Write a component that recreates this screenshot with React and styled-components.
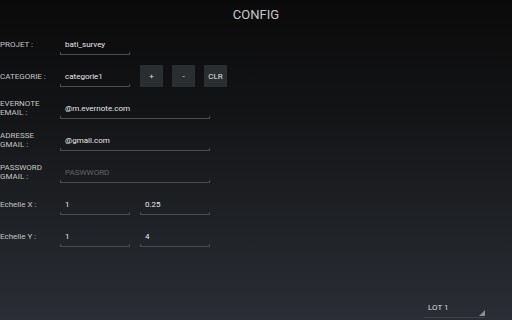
import React from "react";
import styled, { createGlobalStyle } from "styled-components";

const GlobalStyle = createGlobalStyle`
  html, body {
    margin: 0;
    padding: 0;
  }
  body {
    font-family: Roboto, "Liberation Sans", sans-serif;
  }
`;

const Screen = styled.div`
  width: 512px;
  height: 320px;
  display: flex;
  flex-direction: column;
  background: linear-gradient(180deg, #0a0a0a 0%, #131416 35%, #1f2226 70%, #2a2d35 100%);
  overflow: hidden;
`;

const Title = styled.h1`
  margin: 0;
  height: 28px;
  display: flex;
  align-items: center;
  justify-content: center;
  font-size: 13px;
  font-weight: 400;
  color: #c8c8c8;
`;

const Form = styled.div`
  display: flex;
  flex-direction: column;
`;

const Row = styled.div`
  height: 32px;
  display: flex;
  align-items: center;
`;

const Label = styled.div`
  width: 60px;
  font-size: 8px;
  line-height: 9px;
  color: #c4c4c4;
  white-space: pre-line;
`;

const Fields = styled.div`
  display: flex;
  align-items: center;
  gap: ${(p) => p.$gap || 10}px;
`;

const Field = styled.div`
  width: ${(p) => (p.$wide ? 150 : 70)}px;
  height: 22px;
  box-sizing: border-box;
  padding-left: 5px;
  display: flex;
  align-items: center;
  font-size: 8px;
  color: ${(p) => (p.$placeholder ? "#626466" : "#e8e8e8")};
  background-image: linear-gradient(#4a4c50, #4a4c50),
    linear-gradient(#4a4c50, #4a4c50), linear-gradient(#4a4c50, #4a4c50);
  background-repeat: no-repeat;
  background-size: 100% 1px, 1px 3px, 1px 3px;
  background-position: left bottom, left bottom, right bottom;
`;

const Button = styled.div`
  width: 23px;
  height: 22px;
  margin-left: ${(p) => p.$first ? 10 : 9}px;
  display: flex;
  align-items: center;
  justify-content: center;
  background: #2b2e31;
  color: #e0e0e0;
  font-size: 8px;
`;

const Footer = styled.div`
  margin-top: auto;
  display: flex;
  justify-content: flex-end;
  padding: 0 27px 2px 0;
`;

const Spinner = styled.div`
  position: relative;
  width: 61px;
  height: 20px;
  box-sizing: border-box;
  padding-left: 4px;
  display: flex;
  align-items: center;
  font-size: 8px;
  color: #dcdcdc;
  border-bottom: 1px solid #3e4147;
`;

const Corner = styled.div`
  position: absolute;
  right: 0;
  bottom: 1px;
  width: 0;
  height: 0;
  border-left: 6px solid transparent;
  border-bottom: 6px solid #8a8c90;
`;

export default function App() {
  return (
    <>
      <GlobalStyle />
      <Screen>
        <Title>CONFIG</Title>
        <Form>
          <Row>
            <Label>PROJET :</Label>
            <Field>bati_survey</Field>
          </Row>
          <Row>
            <Label>CATEGORIE :</Label>
            <Field>categorie1</Field>
            <Button $first>+</Button>
            <Button>-</Button>
            <Button>CLR</Button>
          </Row>
          <Row>
            <Label>{"EVERNOTE\nEMAIL :"}</Label>
            <Field $wide>@m.evernote.com</Field>
          </Row>
          <Row>
            <Label>{"ADRESSE\nGMAIL :"}</Label>
            <Field $wide>@gmail.com</Field>
          </Row>
          <Row>
            <Label>{"PASSWORD\nGMAIL :"}</Label>
            <Field $wide $placeholder>PASWWORD</Field>
          </Row>
          <Row>
            <Label>Echelle X :</Label>
            <Fields>
              <Field>1</Field>
              <Field>0.25</Field>
            </Fields>
          </Row>
          <Row>
            <Label>Echelle Y :</Label>
            <Fields>
              <Field>1</Field>
              <Field>4</Field>
            </Fields>
          </Row>
        </Form>
        <Footer>
          <Spinner>
            LOT 1
            <Corner />
          </Spinner>
        </Footer>
      </Screen>
    </>
  );
}
